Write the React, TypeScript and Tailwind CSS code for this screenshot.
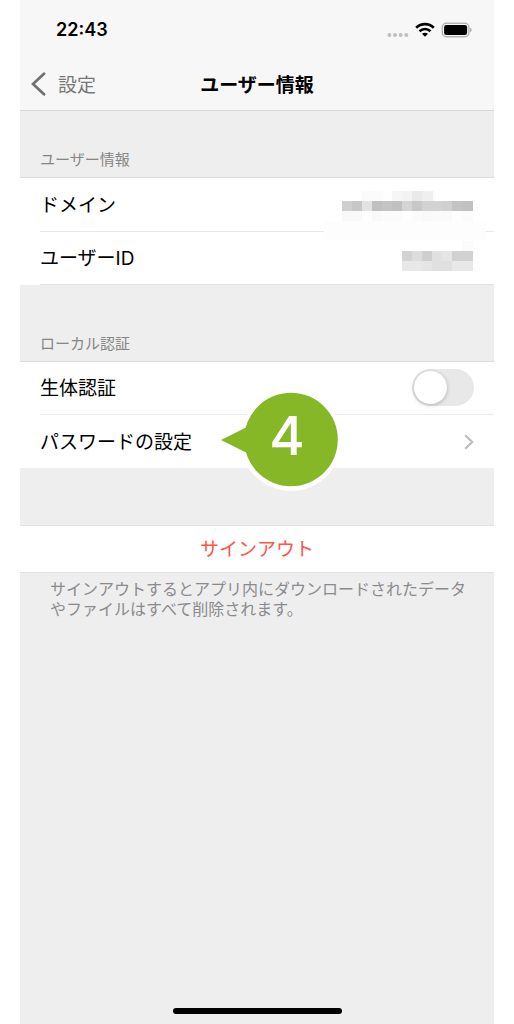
import React from 'react';

interface MosaicRow {
  y: number;
  x: number;
  cells: string[];
}

// Redacted account values, 10px cells
const mosaicRows: MosaicRow[] = [
  { y: 0, x: 38, cells: ['#fbfbfb', '#fbfbfb', '#fefefe', '#f6f6f6', '#f3f3f3', '#e9e9e9', '#efefef'] },
  {
    y: 10,
    x: 18,
    cells: [
      '#cfcfcf', '#c7c7c7', '#e2e2e2', '#c0c0c0', '#c4c4c4', '#c0c0c0', '#d4d4d4',
      '#c8c8c8', '#d2d2d2', '#d2d2d2', '#cfcfcf', '#c3c3c3', '#c1c1c1',
    ],
  },
  {
    y: 20,
    x: 18,
    cells: [
      '#f9f9f9', '#f9f9f9', '#fefefe', '#f9f9f9', '#fbfbfb', '#fbfbfb', '#fefefe',
      '#fbfbfb', '#f9f9f9', '#fafafa', '#fafafa', '#fefefe', '#fbfbfb',
    ],
  },
  { y: 50, x: 138, cells: ['#fbfbfb'] },
  { y: 60, x: 78, cells: ['#d2d2d2', '#dcdcdc', '#cfcfcf', '#e0e0e0', '#e5e5e5', '#d1d1d1', '#d1d1d1'] },
  { y: 70, x: 78, cells: ['#e8e8e8', '#e8e8e8', '#e5e5e5', '#e0e0e0', '#e0e0e0', '#e8e8e8', '#e8e8e8'] },
];

const Mosaic: React.FC = () => (
  <svg
    className="absolute top-[13px] right-2"
    width="162"
    height="80"
    viewBox="0 0 162 80"
    shapeRendering="crispEdges"
    aria-hidden="true"
  >
    <rect x="0" y="30" width="162" height="19" fill="#fdfdfd" />
    {mosaicRows.map((row) =>
      row.cells.map((fill, i) => (
        <rect key={`${row.y}-${i}`} x={row.x + i * 10} y={row.y} width="11" height="10" fill={fill} />
      ))
    )}
  </svg>
);

const StatusBar: React.FC = () => (
  <div className="flex h-[60px] items-center justify-between pr-[22px] pl-9">
    <time className="text-[18px] leading-6 font-semibold">22:43</time>
    <div className="flex items-center gap-[6px]">
      <svg width="22" height="16" viewBox="0 0 22 16" fill="#bfbfbf" aria-hidden="true">
        <circle cx="2.4" cy="13" r="2" />
        <circle cx="8" cy="13" r="2" />
        <circle cx="13.6" cy="13" r="2" />
        <circle cx="19.3" cy="13" r="2" />
      </svg>
      <svg width="20" height="16" viewBox="0 0 20 16" fill="none" stroke="#000" aria-label="Wi-Fi">
        <path d="M1.2 5.7C6.2.9 13.8.9 18.8 5.7" strokeWidth="2.7" />
        <path d="M4.5 9.2C7.7 6.3 12.3 6.3 15.5 9.2" strokeWidth="2.6" />
        <path d="M10 14.7L7 11.8C8.7 10.3 11.3 10.3 13 11.8Z" fill="#000" stroke="none" />
      </svg>
      <svg width="31" height="16" viewBox="0 0 31 16" aria-label="Battery">
        <rect x="1.3" y="1.2" width="26.6" height="13.6" rx="4" fill="none" stroke="#b3b3b3" strokeWidth="1.4" />
        <rect x="3.1" y="3" width="23" height="10" rx="2.3" fill="#000" />
        <path d="M29.3 5.8c1.5.8 1.5 3.6 0 4.4z" fill="#888" />
      </svg>
    </div>
  </div>
);

const StepBadge: React.FC<{ step: number }> = ({ step }) => (
  <div className="pointer-events-none absolute top-[25px] left-[199px] h-[106px] w-[124px]">
    <svg width="124" height="106" viewBox="0 0 124 106" aria-hidden="true">
      <circle cx="72" cy="53" r="51" fill="#fff" />
      <path d="M2 53L29 39.5V66.5Z" fill="#86b727" />
      <circle cx="72" cy="52.5" r="46.8" fill="#86b727" />
    </svg>
    <span className="absolute inset-0 flex items-center justify-center pb-2 pl-3 text-[54px] leading-none font-medium text-white">
      {step}
    </span>
  </div>
);

const SectionTitle: React.FC<{ children: React.ReactNode }> = ({ children }) => (
  <h2 className="px-5 pb-[7px] text-[15px] leading-5 text-[#858585]">{children}</h2>
);

export default function App() {
  return (
    <div className="min-h-screen bg-white px-5 font-[Inter,'Noto_Sans_CJK_JP',sans-serif] text-black">
      <div className="flex min-h-screen flex-col bg-[#eeeeee]">
        <header className="border-b border-[#d6d6d6] bg-[#f7f7f7]">
          <StatusBar />
          <div className="grid h-[50px] grid-cols-[1fr_auto_1fr] items-center pb-[2px]">
            <button type="button" className="flex items-center gap-3 pl-[11px] text-[19px] leading-6 text-[#777777]">
              <svg width="15" height="24" viewBox="0 0 15 24" fill="none" stroke="#717171" strokeWidth="2.8" strokeLinecap="round" aria-hidden="true">
                <path d="M13 1.8L2 12L13 22.2" />
              </svg>
              <span className="pt-1">設定</span>
            </button>
            <h1 className="pt-1 text-[19px] leading-6 font-bold">ユーザー情報</h1>
          </div>
        </header>

        <main>
          <section className="pt-[39px]">
            <SectionTitle>ユーザー情報</SectionTitle>
            <dl className="relative border-t border-[#dddddd] bg-white pl-5 text-[19px] leading-6">
              <dt className="flex h-[54px] items-center border-b border-[#e8e8e8] pt-[2px]">ドメイン</dt>
              <dt className="flex h-[53px] items-center border-b border-[#e2e2e2] pt-[2px]">ユーザーID</dt>
              <dd>
                <Mosaic />
              </dd>
            </dl>
          </section>

          <section className="pt-[49px]">
            <SectionTitle>ローカル認証</SectionTitle>
            <div className="relative border-t border-[#dddddd] bg-white pl-5 text-[19px] leading-6">
              <div className="flex h-[53px] items-center justify-between border-b border-[#eaeaea] pr-5 pb-[2px]">
                <label htmlFor="biometrics" className="pt-1">生体認証</label>
                <input
                  id="biometrics"
                  type="checkbox"
                  role="switch"
                  className="h-[37px] w-[62px] appearance-none rounded-full bg-[#e8e8e8] p-[2px] before:block before:size-[33px] before:rounded-full before:bg-white before:shadow-[0_1px_4px_rgba(0,0,0,0.25)] checked:bg-green-500 checked:before:translate-x-[25px]"
                />
              </div>
              <button type="button" className="flex h-[53px] w-full items-center justify-between pr-5">
                <span className="pt-[2px]">パスワードの設定</span>
                <svg width="10" height="16" viewBox="0 0 10 16" fill="none" stroke="#bcbcbc" strokeWidth="2.2" aria-hidden="true">
                  <path d="M1.2 1.2L8.2 8L1.2 14.8" />
                </svg>
              </button>
              <StepBadge step={4} />
            </div>
          </section>

          <section className="pt-[57px]">
            <button
              type="button"
              className="flex h-12 w-full items-center justify-center border-y border-[#e2e2e2] bg-white pt-[2px] text-[19px] leading-6 text-[#ff544a]"
            >
              サインアウト
            </button>
            <p className="pt-[6px] pr-5 pl-[30px] text-[16px] leading-5 text-[#8a8a8e]">
              サインアウトするとアプリ内にダウンロードされたデータやファイルはすべて削除されます。
            </p>
          </section>
        </main>

        <div className="mx-auto mt-auto mb-[10px] h-[6px] w-[169px] rounded-full bg-black" />
      </div>
    </div>
  );
}
